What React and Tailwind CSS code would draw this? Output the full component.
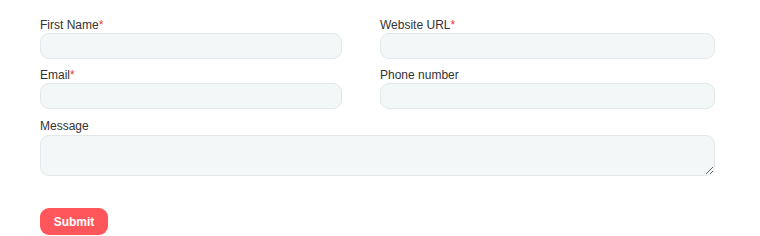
import React from "react";

const Field = ({ label, required, className = "" }) => (
  <div className={`flex flex-col ${className}`}>
    <label className="mb-[1px] text-[12px] leading-[14px] text-[#333333]">
      {label}
      {required && <span className="text-[#e53935]">*</span>}
    </label>
    <input
      type="text"
      className="h-[26px] w-full rounded-[9px] border border-[#e2e8ea] bg-[#f4f7f8] px-3 text-[12px] outline-none"
    />
  </div>
);

const App = () => {
  return (
    <div
      className="h-[236px] w-[760px] bg-white pl-[40px] pt-[18px]"
      style={{ fontFamily: '"Liberation Sans", Arial, sans-serif' }}
    >
      <form className="w-[675px]" onSubmit={(e) => e.preventDefault()}>
        <div className="grid grid-cols-[302px_335px] gap-x-[38px] gap-y-[9px]">
          <Field label="First Name" required />
          <Field label="Website URL" required />
          <Field label="Email" required />
          <Field label="Phone number" />
        </div>

        <div className="mt-[10px] flex flex-col">
          <label className="mb-[2px] text-[12px] leading-[14px] text-[#333333]">Message</label>
          <textarea className="h-[41px] w-full rounded-[9px] border border-[#e2e8ea] bg-[#f4f7f8] px-3 text-[12px] outline-none" />
        </div>

        <button
          type="submit"
          className="mt-[32px] h-[27px] w-[68px] rounded-[9px] bg-[#ff565c] text-[12px] font-bold text-white"
        >
          Submit
        </button>
      </form>
    </div>
  );
};

export default App;
